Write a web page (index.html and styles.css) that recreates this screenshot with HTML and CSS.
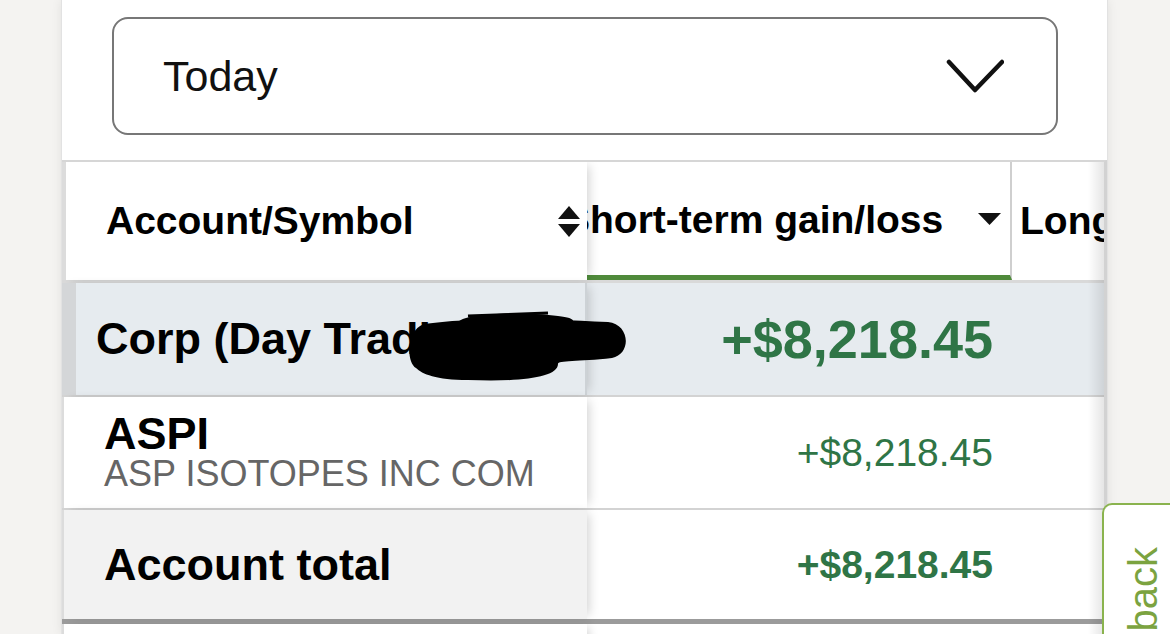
FILE: index.html
```html
<!DOCTYPE html>
<html>
	<head>
		<meta charset="utf-8" />
		<title>Gain/Loss</title>
		<link rel="stylesheet" href="styles.css">
	</head>
	<body>
		<div class="panel">
			<div class="period-select">
				<span class="period-label">Today</span>
				<svg class="chevron" width="58" height="34" viewBox="0 0 58 34">
					<polyline points="3,3 29,31 56,3" />
				</svg>
			</div>

			<div class="gl-table">
				<div class="gl-row gl-head">
					<div class="cell col-acct">
						<span>Account/Symbol</span>
						<svg class="sort-icon" width="22" height="31" viewBox="0 0 22 31">
							<polygon points="11,0 22,13 0,13" />
							<polygon points="0,18 22,18 11,31" />
						</svg>
					</div>
					<div class="cell col-st">
						<span class="head-label">Short-term gain/loss</span>
						<svg class="caret" width="23" height="12" viewBox="0 0 23 12">
							<polygon points="0,0 23,0 11.5,12" />
						</svg>
					</div>
					<div class="cell col-lt">Long-term gain/loss</div>
				</div>

				<div class="gl-row gl-account">
					<div class="cell col-acct">Corp (Day Trading)</div>
					<div class="cell col-st value">+$8,218.45</div>
					<div class="cell col-lt"></div>
					<!-- redacted account number -->
					<svg class="redact" width="226" height="74" viewBox="0 0 226 74">
						<path d="M18 14 C 60 8, 120 8, 202 12 C 224 14, 226 44, 206 48 C 172 52, 152 50, 152 54 C 152 68, 112 72, 62 70 C 30 70, 16 64, 10 58 C 0 52, 0 20, 18 14 Z" />
						<path d="M52 12 C 62 2, 122 2, 152 6 C 172 8, 172 14, 152 14 Z" />
						<path d="M62 6 L 142 3" stroke="#000" stroke-width="3" fill="none" />
					</svg>
				</div>

				<div class="gl-row gl-position">
					<div class="cell col-acct">
						<div class="symbol">ASPI</div>
						<div class="symbol-desc">ASP ISOTOPES INC COM</div>
					</div>
					<div class="cell col-st value">+$8,218.45</div>
					<div class="cell col-lt"></div>
				</div>

				<div class="gl-row gl-total">
					<div class="cell col-acct">Account total</div>
					<div class="cell col-st value">+$8,218.45</div>
					<div class="cell col-lt"></div>
				</div>

				<div class="gl-row gl-next">
					<div class="cell col-acct"></div>
					<div class="cell col-st"></div>
					<div class="cell col-lt"></div>
				</div>
			</div>
		</div>

		<div class="feedback-tab"><span>Feedback</span></div>
	</body>
</html>
```

FILE: styles.css
```css
*{
  box-sizing: border-box;
}

body{
  margin: 0;
  height: 634px;
  overflow: hidden;
  background: #f4f3f1;
  font-family: "Liberation Sans", Arial, sans-serif;
  color: #000;
}

.panel{
  margin-left: 61px;
  width: 1047px;
  height: 100%;
  background: #fff;
  border-left: 1px solid #e2e2e2;
  border-right: 1px solid #e2e2e2;
  box-shadow: 0 0 10px rgb(0 0 0 / 8%);
  padding-top: 17px;
}

/*    PERIOD SELECT    */
.period-select{
  display: flex;
  align-items: center;
  justify-content: space-between;
  margin: 0 49px 0 50px;
  height: 118px;
  border: 2px solid #777;
  border-radius: 16px;
  padding: 0 52px 0 49px;
}

.period-label{
  font-size: 43px;
  color: #111;
}

.chevron polyline{
  fill: none;
  stroke: #111;
  stroke-width: 4.5;
  stroke-linecap: round;
  stroke-linejoin: round;
}

/*    TABLE    */
.gl-table{
  position: relative;
  margin-top: 25px;
  overflow: hidden;
  border-top: 2px solid #d6d6d6;
  border-right: 3px solid #d2d2d2;
}
.gl-table::after{
  content: "";
  position: absolute;
  top: 0;
  bottom: 0;
  right: 0;
  width: 16px;
  background: linear-gradient(to right, rgb(0 0 0 / 0%), rgb(0 0 0 / 10%));
  z-index: 3;
}

.gl-row{
  position: relative;
  display: flex;
  border-bottom: 2px solid #d3d3d3;
}

.cell{
  display: flex;
  align-items: center;
  flex: none;
  white-space: nowrap;
}

.col-acct{
  position: relative;
  z-index: 2;
  width: 525px;
  overflow: hidden;
  border-left: 2px solid #dcdcdc;
  padding-left: 40px;
  box-shadow: 6px 0 10px -4px rgb(0 0 0 / 18%);
}
.col-st{
  width: 425px;
  justify-content: flex-end;
  padding-right: 19px;
}
.col-lt{
  width: 200px;
  padding-left: 8px;
  overflow: hidden;
}

.value{
  color: #2f7546;
  font-size: 39px;
}

/* header */
.gl-head{
  height: 121px;
  border-bottom-width: 3px;
  border-bottom-color: #d9d9d9;
  font-size: 39px;
  font-weight: bold;
}
.gl-head .col-acct{
  justify-content: space-between;
  border-left-width: 4px;
  padding-right: 7px;
  background: #fff;
}
.gl-head .col-st{
  justify-content: space-between;
  padding-right: 9px;
  border-bottom: 5px solid #4f8a3b;
  border-right: 2px solid #cfcfcf;
}
.head-label{
  margin-left: -23px;
  padding-top: 3px;
}
.sort-icon, .caret{
  fill: #111;
}

/* account row */
.gl-account{
  height: 114px;
  background: #e6ebef;
}
.gl-account .col-acct{
  border-left: 14px solid #d4d6d8;
  border-right: 2px solid #cdd2d6;
  padding-left: 20px;
  font-size: 45px;
  font-weight: bold;
  background: #e6ebef;
}
.gl-account .value{
  font-size: 54px;
  font-weight: bold;
}

.redact{
  position: absolute;
  left: 344px;
  top: 27px;
  z-index: 4;
  fill: #000;
}

/* position row */
.gl-position{
  height: 113px;
}
.gl-position .col-acct{
  flex-direction: column;
  align-items: flex-start;
  justify-content: center;
  background: #fff;
}
.symbol{
  font-size: 45px;
  font-weight: bold;
  line-height: 42px;
}
.symbol-desc{
  font-size: 36px;
  line-height: 38px;
  color: #666;
}

/* total row */
.gl-total{
  height: 114px;
  border-bottom: 5px solid #9b9b9b;
}
.gl-total .col-acct{
  font-size: 45px;
  font-weight: bold;
  background: #f2f2f2;
}
.gl-total .value{
  font-weight: bold;
}

.gl-next{
  height: 40px;
  border-bottom: none;
}
.gl-next .col-acct{
  background: #fff;
}

/*    FEEDBACK    */
.feedback-tab{
  position: fixed;
  left: 1102px;
  top: 503px;
  width: 90px;
  height: 260px;
  background: #fff;
  border: 2px solid #8ab34e;
  border-right: none;
  border-radius: 10px 0 0 10px;
  padding: 42px 0 0 19px;
  z-index: 5;
}
.feedback-tab span{
  display: block;
  writing-mode: vertical-rl;
  transform: rotate(180deg);
  font-size: 40px;
  line-height: 40px;
  color: #7ba340;
}
```
